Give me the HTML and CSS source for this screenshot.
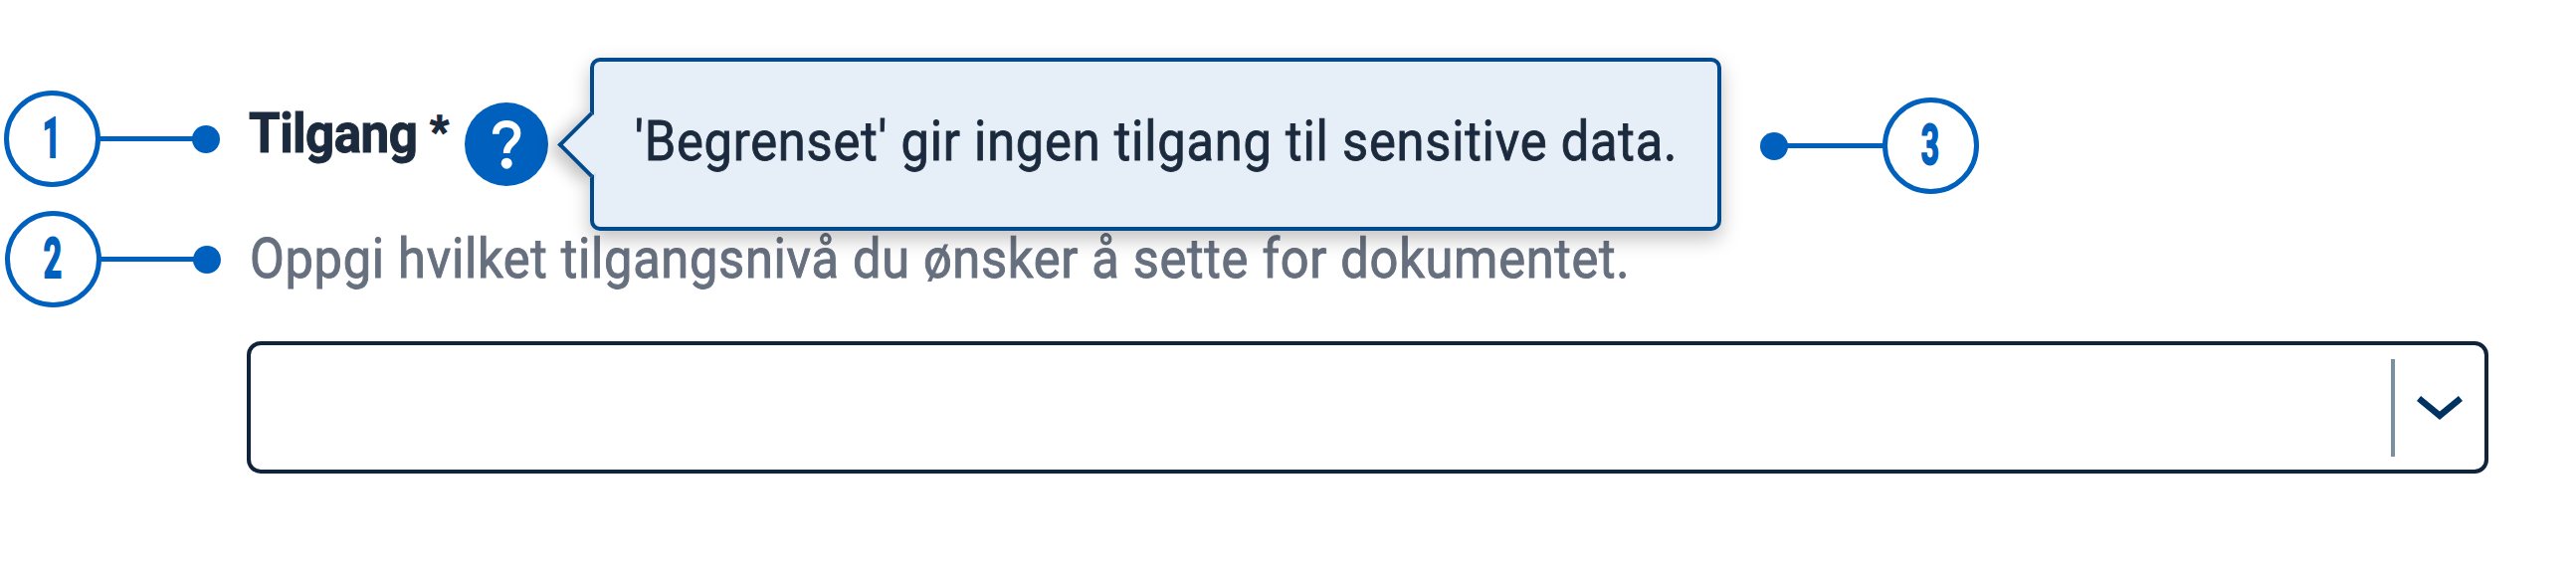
FILE: index.html
```html
<!DOCTYPE html>
<html lang="no">
<head>
<meta charset="utf-8">
<title>Tilgang</title>
<link rel="stylesheet" href="styles.css">
</head>
<body>
<main class="figure">
  <div class="row row-label">
    <div class="marker marker-one"><span class="badge"><span class="digit">1</span></span><span class="line"></span><span class="dot"></span></div>
    <label class="label" for="access"><span class="name">Tilgang</span> <span class="star">*</span></label>
    <button class="help" type="button" aria-label="Hjelp">
      <svg viewBox="0 0 84 84" width="84" height="84"><circle cx="42" cy="42" r="42" fill="#0060bd"/><path d="M31.3 31.8C31.3 25.2 35.7 21.5 42 21.5c6.600 0 11 3.700 11 9.500 0 4.600-2.300 7-5.500 9.800C44.200 43.700 42.200 46 42.200 51" fill="none" stroke="#fff" stroke-width="6.800"/><circle cx="42.200" cy="61.200" r="5.500" fill="#fff"/></svg>
    </button>
    <div class="tooltip" role="tooltip"><span class="arrow"></span><span class="tip-text">'Begrenset' gir ingen tilgang til sensitive data.</span></div>
    <div class="marker marker-three"><span class="dot"></span><span class="line"></span><span class="badge"><span class="digit">3</span></span></div>
  </div>
  <div class="row row-hint">
    <div class="marker marker-two"><span class="badge"><span class="digit">2</span></span><span class="line"></span><span class="dot"></span></div>
    <p class="hint">Oppgi hvilket tilgangsnivå du ønsker å sette for dokumentet.</p>
  </div>
  <div class="select" id="access">
    <span class="divider"></span>
    <svg class="chevron" viewBox="0 0 46 26" width="46" height="26"><path d="M2 3.500 23 20.800 44 3.500" fill="none" stroke="#003262" stroke-width="6.500"/></svg>
  </div>
</main>
</body>
</html>
```
FILE: styles.css
```css
* { box-sizing: border-box; }
body { margin: 0; background: #fff; font-family: Roboto, "Liberation Sans", sans-serif; }
.figure { width: 2589px; height: 582px; padding-top: 57px; overflow: hidden; }
.row { display: flex; align-items: flex-start; }
.row-label { height: 155px; }
.row-hint { height: 131px; }

.marker { display: flex; align-items: center; flex: none; height: 97px; }
.marker-one { margin: 34px 0 0 4px; }
.marker-two { margin: 0 0 0 5px; }
.marker-three { margin: 41px 0 0 39px; }
.marker-three .line { width: 99px; }
.badge { width: 97px; height: 97px; border: 5px solid #0060bd; border-radius: 50%; display: flex; align-items: center; justify-content: center; }
.digit { color: #0060bd; font-size: 55px; line-height: 55px; font-weight: 700; transform: scaleX(.58); -webkit-text-stroke: 2px #0060bd; }
.marker-one .digit { margin-left: -2px; }
.marker-two .digit { margin-left: -2px; }
.marker-three .digit { margin-left: -2px; }
.line { width: 96px; height: 5px; margin: 0 -2px; background: #0060bd; }
.dot { width: 28px; height: 28px; border-radius: 50%; background: #0060bd; }

.label { display: flex; flex: none; width: 217px; margin: 45px 0 0 29px; font-size: 55px; line-height: 64px; font-weight: 700; color: #1c2a3d; white-space: nowrap; }
.name { width: 182px; letter-spacing: -.6px; transform: scaleX(.93); transform-origin: 0 0; -webkit-text-stroke: 1px #1c2a3d; }
.star { font-size: 42px; line-height: 60px; -webkit-text-stroke: 1.500px #1c2a3d; }
.help { flex: none; margin: 46px 0 0 0; padding: 0; border: 0; background: none; width: 84px; height: 84px; }
.help svg { display: block; }

.tooltip { position: relative; z-index: 1; flex: none; margin: 1px 0 0 42px; width: 1137px; height: 174px; padding: 48px 0 0 41px; border: 4px solid #004a8d; border-radius: 10px; background: #e6eef8; box-shadow: 0 8px 20px rgba(0, 0, 0, .25); }
.arrow { position: absolute; left: -27px; top: 60px; width: 47px; height: 47px; border: solid #004a8d; border-width: 0 0 4px 4px; background: #e6eef8; transform: rotate(45deg); box-shadow: -4px 10px 16px rgba(0, 0, 0, .22); clip-path: polygon(-60% -60%, 4px -4px, calc(100% + 4px) calc(100% - 4px), 160% 160%, -60% 160%); }
.tip-text { position: relative; display: block; width: max-content; font-size: 55px; line-height: 64px; letter-spacing: .86px; transform: scaleX(.92); transform-origin: 0 0; color: #1c2a3d; -webkit-text-stroke: .9px #1c2a3d; white-space: nowrap; }
.hint { margin: 16px 0 0 29px; font-size: 55px; line-height: 64px; letter-spacing: .76px; transform: scaleX(.92); transform-origin: 0 0; color: #67707f; -webkit-text-stroke: 1px #67707f; white-space: nowrap; }

.select { display: flex; align-items: center; justify-content: flex-end; width: 2253px; height: 133px; margin-left: 248px; padding-right: 22px; border: 4px solid #10233a; border-radius: 14px; background: #fff; }
.divider { width: 4px; height: 98px; background: #78909f; }
.chevron { margin-left: 22px; }
```
